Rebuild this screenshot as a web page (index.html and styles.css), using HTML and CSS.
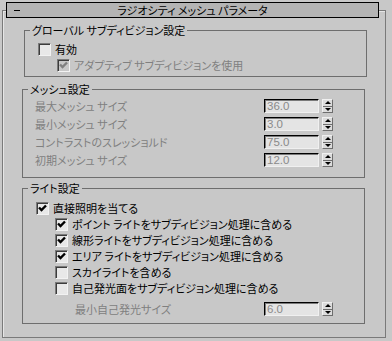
FILE: index.html
```html
<!DOCTYPE html>
<html lang="ja">
<head>
    <meta charset="UTF-8">
    <title>ラジオシティ メッシュ パラメータ</title>
    <link rel="stylesheet" href="styles.css">
</head>
<body>
    <!-- ロールアウト -->
    <div class="rollout">
        <div class="rollout-title">
            <span class="collapse"></span>
            <span class="title-text">ラジオシティ メッシュ パラメータ</span>
            <span></span>
        </div>

        <!-- グローバル サブディビジョン設定 -->
        <fieldset class="group group-global">
            <legend>グローバル サブディビジョン設定</legend>
            <div class="group-body">
                <div class="check-row">
                    <span class="checkbox"></span>
                    <span>有効</span>
                </div>
                <div class="check-row sub disabled">
                    <span class="checkbox checked">
                        <svg width="11" height="11" viewBox="0 0 11 11"><path d="M2 4.5l2.5 2.5 4.5-4.5" /></svg>
                    </span>
                    <span>アダプティブ サブディビジョンを使用</span>
                </div>
            </div>
        </fieldset>

        <!-- メッシュ設定 -->
        <fieldset class="group group-mesh">
            <legend>メッシュ設定</legend>
            <div class="group-body">
                <div class="spin-row disabled">
                    <span class="spin-label">最大メッシュ サイズ</span>
                    <span class="spin-field">36.0</span>
                    <span class="spin-btn"><i class="up"></i><i class="down"></i></span>
                </div>
                <div class="spin-row disabled">
                    <span class="spin-label">最小メッシュ サイズ</span>
                    <span class="spin-field">3.0</span>
                    <span class="spin-btn"><i class="up"></i><i class="down"></i></span>
                </div>
                <div class="spin-row disabled">
                    <span class="spin-label">コントラストのスレッショルド</span>
                    <span class="spin-field">75.0</span>
                    <span class="spin-btn"><i class="up"></i><i class="down"></i></span>
                </div>
                <div class="spin-row disabled">
                    <span class="spin-label">初期メッシュ サイズ</span>
                    <span class="spin-field">12.0</span>
                    <span class="spin-btn"><i class="up"></i><i class="down"></i></span>
                </div>
            </div>
        </fieldset>

        <!-- ライト設定 -->
        <fieldset class="group group-light">
            <legend>ライト設定</legend>
            <div class="group-body">
                <div class="check-row">
                    <span class="checkbox checked">
                        <svg width="11" height="11" viewBox="0 0 11 11"><path d="M2 4.5l2.5 2.5 4.5-4.5" /></svg>
                    </span>
                    <span>直接照明を当てる</span>
                </div>
                <div class="check-row sub">
                    <span class="checkbox checked">
                        <svg width="11" height="11" viewBox="0 0 11 11"><path d="M2 4.5l2.5 2.5 4.5-4.5" /></svg>
                    </span>
                    <span>ポイント ライトをサブディビジョン処理に含める</span>
                </div>
                <div class="check-row sub">
                    <span class="checkbox checked">
                        <svg width="11" height="11" viewBox="0 0 11 11"><path d="M2 4.5l2.5 2.5 4.5-4.5" /></svg>
                    </span>
                    <span>線形ライトをサブディビジョン処理に含める</span>
                </div>
                <div class="check-row sub">
                    <span class="checkbox checked">
                        <svg width="11" height="11" viewBox="0 0 11 11"><path d="M2 4.5l2.5 2.5 4.5-4.5" /></svg>
                    </span>
                    <span>エリア ライトをサブディビジョン処理に含める</span>
                </div>
                <div class="check-row sub">
                    <span class="checkbox"></span>
                    <span>スカイライトを含める</span>
                </div>
                <div class="check-row sub">
                    <span class="checkbox"></span>
                    <span>自己発光面をサブディビジョン処理に含める</span>
                </div>
                <div class="spin-row disabled emit-row">
                    <span class="spin-label">最小自己発光サイズ</span>
                    <span class="spin-field">6.0</span>
                    <span class="spin-btn"><i class="up"></i><i class="down"></i></span>
                </div>
            </div>
        </fieldset>
    </div>
</body>
</html>
```

FILE: styles.css
```css
/* 基本 */
* {
    margin: 0;
    padding: 0;
    box-sizing: border-box;
}

body {
    width: 392px;
    height: 341px;
    overflow: hidden;
    background: #c8c8c8;
    color: #000;
    font-family: "Noto Sans CJK JP", sans-serif;
    font-size: 11px;
    font-feature-settings: "palt";
    line-height: 14px;
}

/* ロールアウト枠 */
.rollout {
    margin: 10px 6px 0 2px;
    height: 328px;
    border: 1px solid #7a7a7a;
    box-shadow: inset 1px 1px 0 #e6e6e6;
}

.rollout-title {
    display: grid;
    grid-template-columns: 1fr auto 1fr;
    align-items: center;
    height: 16px;
    margin: -9px 6px 0 3px;
    border: 1px solid #000;
    background: #b4b4b4;
}

.collapse {
    width: 6px;
    height: 1px;
    margin-left: 7px;
    background: #000;
}

.title-text {
    line-height: 14px;
}

/* グループ */
.group {
    min-width: 0;
    border: 1px solid #6e6e6e;
    margin: 5px 20px 0 19px;
}

.group legend {
    margin-left: 5px;
    padding: 0 2px;
    line-height: 14px;
    height: 14px;
}

.group-global {
    margin: 5px 18px 0 21px;
}

.group-global .group-body {
    padding: 4px 0 3px 13px;
}

.group-mesh {
    margin-top: 5px;
}

.group-mesh .group-body {
    padding: 1px 31px 8px 12px;
}

.group-light {
    margin-top: 3px;
}

.group-light .group-body {
    padding: 5px 31px 5px 13px;
}

/* チェックボックス */
.check-row {
    display: flex;
    align-items: center;
    height: 16px;
    white-space: nowrap;
}

.check-row.sub {
    margin-left: 19px;
}

.checkbox {
    display: flex;
    align-items: center;
    justify-content: center;
    flex: none;
    width: 13px;
    height: 13px;
    margin-right: 4px;
    background: #e8e8e8;
    border: 1px solid;
    border-color: #7a7a7a #f2f2f2 #f2f2f2 #7a7a7a;
    box-shadow: inset 1px 1px 0 #3c3c3c;
}

.checkbox svg path {
    fill: none;
    stroke: #000;
    stroke-width: 2.4;
}

.disabled {
    color: #808080;
}

.disabled .checkbox {
    background: #c8c8c8;
}

.disabled .checkbox svg path {
    stroke: #808080;
}

/* スピナー */
.spin-row {
    display: flex;
    align-items: center;
    height: 18px;
}

.spin-label {
    flex: 1;
    white-space: nowrap;
}

.emit-row {
    margin-top: 4px;
}

.emit-row .spin-label {
    padding-left: 39px;
}

.spin-field {
    width: 55px;
    height: 14px;
    padding-left: 2px;
    background: #e4e4e4;
    border: 1px solid;
    border-color: #000 #f0f0f0 #f0f0f0 #000;
    box-shadow: inset 1px 1px 0 #7a7a7a;
    color: #8a8a8a;
    font-family: "Liberation Sans", sans-serif;
    font-size: 11.5px;
    line-height: 12px;
}

.spin-btn {
    display: flex;
    flex-direction: column;
    width: 11px;
    height: 14px;
    margin-left: 3px;
    background: #dcdcdc;
    border: 1px solid;
    border-color: #f0f0f0 #6e6e6e #6e6e6e #f0f0f0;
}

.spin-btn i {
    flex: 1;
    display: flex;
    align-items: center;
    justify-content: center;
}

.spin-btn i::before {
    content: "";
    border-left: 3px solid transparent;
    border-right: 3px solid transparent;
}

.spin-btn .up {
    border-bottom: 1px solid #6e6e6e;
}

.spin-btn .up::before {
    border-bottom: 3px solid #000;
}

.spin-btn .down::before {
    border-top: 3px solid #000;
}
```
